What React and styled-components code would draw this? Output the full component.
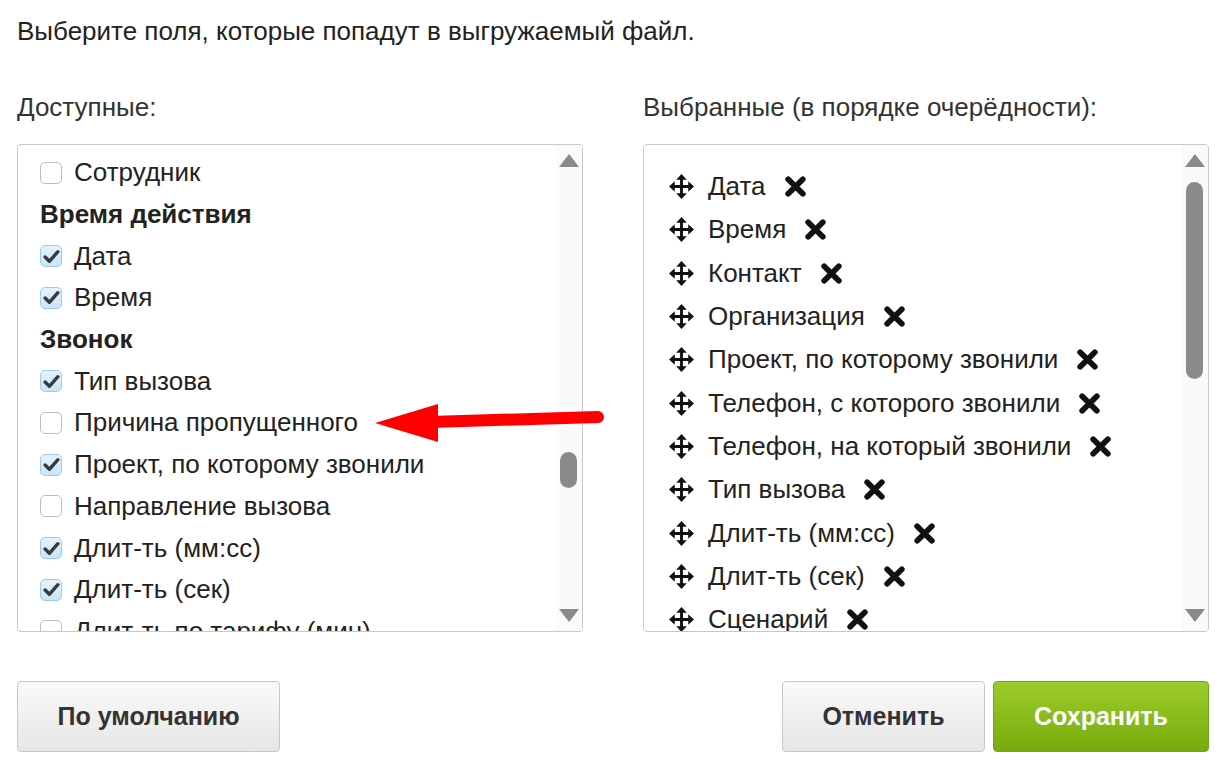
import React from "react";
import styled, { createGlobalStyle } from "styled-components";

const Global = createGlobalStyle`
  html, body {
    margin: 0;
    padding: 0;
    background: #fff;
  }
  body {
    font-family: "Liberation Sans", Arial, sans-serif;
    color: #222;
  }
`;

const Page = styled.div`
  position: relative;
  width: 1229px;
  height: 772px;
  box-sizing: border-box;
  padding: 15px 20px 0 17px;
  overflow: hidden;
`;

const Title = styled.div`
  font-size: 26px;
  line-height: 32px;
  color: #222;
`;

const Columns = styled.div`
  display: grid;
  grid-template-columns: 566px 566px;
  column-gap: 60px;
  margin-top: 44px;
`;

const Column = styled.div`
  display: flex;
  flex-direction: column;
`;

const Label = styled.div`
  font-size: 26px;
  line-height: 32px;
  color: #333;
  margin-bottom: 21px;
`;

const Panel = styled.div`
  position: relative;
  height: 488px;
  box-sizing: border-box;
  border: 1px solid #c8c8c8;
  border-radius: 4px;
  overflow: hidden;
  display: flex;
`;

const List = styled.div`
  flex: 1;
  padding: ${(p) => p.$pad}px 0 0 ${(p) => p.$left}px;
  overflow: hidden;
`;

const Track = styled.div`
  position: relative;
  width: 26px;
  background: #fafafa;
  flex-shrink: 0;
`;

const ArrowUp = styled.div`
  position: absolute;
  left: 3px;
  top: 9px;
  width: 0;
  height: 0;
  border-left: 10px solid transparent;
  border-right: 10px solid transparent;
  border-bottom: 13px solid #8a8a8a;
`;

const ArrowDown = styled.div`
  position: absolute;
  left: 3px;
  bottom: 9px;
  width: 0;
  height: 0;
  border-left: 10px solid transparent;
  border-right: 10px solid transparent;
  border-top: 13px solid #8a8a8a;
`;

const Thumb = styled.div`
  position: absolute;
  left: 4px;
  width: 17px;
  border-radius: 9px;
  background: #8a8a8a;
`;

const Row = styled.div`
  display: flex;
  align-items: center;
  height: ${(p) => p.$h}px;
  font-size: 26px;
  white-space: nowrap;
  color: #222;
  font-weight: ${(p) => (p.$bold ? 700 : 400)};
`;

const Box = styled.span`
  width: 22px;
  height: 22px;
  box-sizing: border-box;
  border-radius: 5px;
  margin-right: 12px;
  flex-shrink: 0;
  display: flex;
  align-items: center;
  justify-content: center;
  border: 1px solid ${(p) => (p.$on ? "#9fcbe9" : "#bdbdbd")};
  background: ${(p) => (p.$on ? "linear-gradient(#e4f3fd, #c9e5f8)" : "#fff")};
`;

const Move = styled.span`
  display: flex;
  margin-right: 14px;
`;

const Remove = styled.span`
  display: flex;
  margin-left: 18px;
`;

const Buttons = styled.div`
  display: flex;
  align-items: center;
  margin-top: 49px;
`;

const Spacer = styled.div`
  flex: 1;
`;

const Button = styled.button`
  height: 71px;
  width: ${(p) => p.$w}px;
  margin-left: ${(p) => p.$ml || 0}px;
  border-radius: 4px;
  font-family: "Liberation Sans", Arial, sans-serif;
  font-size: 25px;
  font-weight: 700;
  cursor: pointer;
  border: 1px solid ${(p) => (p.$primary ? "#6ea81a" : "#c6c6c6")};
  color: ${(p) => (p.$primary ? "#fff" : "#333")};
  background: ${(p) =>
    p.$primary
      ? "linear-gradient(#9ccc2c, #77ab0c)"
      : "linear-gradient(#fafafa, #e6e6e6)"};
`;

const Pointer = styled.svg`
  position: absolute;
  left: 370px;
  top: 398px;
`;

const Check = () => (
  <svg width="17" height="15" viewBox="0 0 16 14">
    <path
      d="M2 7.5 L6 11.5 L14 2.5"
      fill="none"
      stroke="#3a3a3a"
      strokeWidth="3.2"
      strokeLinecap="round"
      strokeLinejoin="round"
    />
  </svg>
);

const MoveIcon = () => (
  <svg width="25" height="25" viewBox="0 0 26 26">
    <path d="M13 4 V22 M4 13 H22" stroke="#111" strokeWidth="3" />
    <path d="M13 0 L18.5 6 H7.5 Z M13 26 L18.5 20 H7.5 Z M0 13 L6 7.5 V18.5 Z M26 13 L20 7.5 V18.5 Z" fill="#111" />
  </svg>
);

const CrossIcon = () => (
  <svg width="23" height="23" viewBox="0 0 22 22">
    <path d="M4 4 L18 18 M18 4 L4 18" stroke="#111" strokeWidth="5.5" strokeLinecap="round" />
  </svg>
);

const available = [
  { t: "Сотрудник", c: false },
  { t: "Время действия", h: true },
  { t: "Дата", c: true },
  { t: "Время", c: true },
  { t: "Звонок", h: true },
  { t: "Тип вызова", c: true },
  { t: "Причина пропущенного", c: false },
  { t: "Проект, по которому звонили", c: true },
  { t: "Направление вызова", c: false },
  { t: "Длит-ть (мм:сс)", c: true },
  { t: "Длит-ть (сек)", c: true },
  { t: "Длит-ть по тарифу (мин)", c: false },
];

const selected = [
  "Дата",
  "Время",
  "Контакт",
  "Организация",
  "Проект, по которому звонили",
  "Телефон, с которого звонили",
  "Телефон, на который звонили",
  "Тип вызова",
  "Длит-ть (мм:сс)",
  "Длит-ть (сек)",
  "Сценарий",
];

export default function App() {
  return (
    <Page>
      <Global />
      <Title>Выберите поля, которые попадут в выгружаемый файл.</Title>
      <Columns>
        <Column>
          <Label>Доступные:</Label>
          <Panel>
            <List $pad={7} $left={22}>
              {available.map((it) =>
                it.h ? (
                  <Row key={it.t} $h={41.7} $bold>
                    {it.t}
                  </Row>
                ) : (
                  <Row key={it.t} $h={41.7}>
                    <Box $on={it.c}>{it.c && <Check />}</Box>
                    {it.t}
                  </Row>
                )
              )}
            </List>
            <Track>
              <ArrowUp />
              <Thumb style={{ top: 307, height: 36 }} />
              <ArrowDown />
            </Track>
          </Panel>
        </Column>
        <Column>
          <Label>Выбранные (в порядке очерёдности):</Label>
          <Panel>
            <List $pad={20} $left={25}>
              {selected.map((t) => (
                <Row key={t} $h={43.3}>
                  <Move>
                    <MoveIcon />
                  </Move>
                  {t}
                  <Remove>
                    <CrossIcon />
                  </Remove>
                </Row>
              ))}
            </List>
            <Track>
              <ArrowUp />
              <Thumb style={{ top: 37, height: 197 }} />
              <ArrowDown />
            </Track>
          </Panel>
        </Column>
      </Columns>
      <Buttons>
        <Button $w={263}>По умолчанию</Button>
        <Spacer />
        <Button $w={203}>Отменить</Button>
        <Button $w={216} $ml={8} $primary>
          Сохранить
        </Button>
      </Buttons>
      <Pointer width="240" height="50" viewBox="0 0 240 50">
        <path d="M60 24 L228 19" stroke="#ff0000" strokeWidth="12" strokeLinecap="round" />
        <path d="M5 25 L68 6 L68 44 Z" fill="#ff0000" />
      </Pointer>
    </Page>
  );
}
